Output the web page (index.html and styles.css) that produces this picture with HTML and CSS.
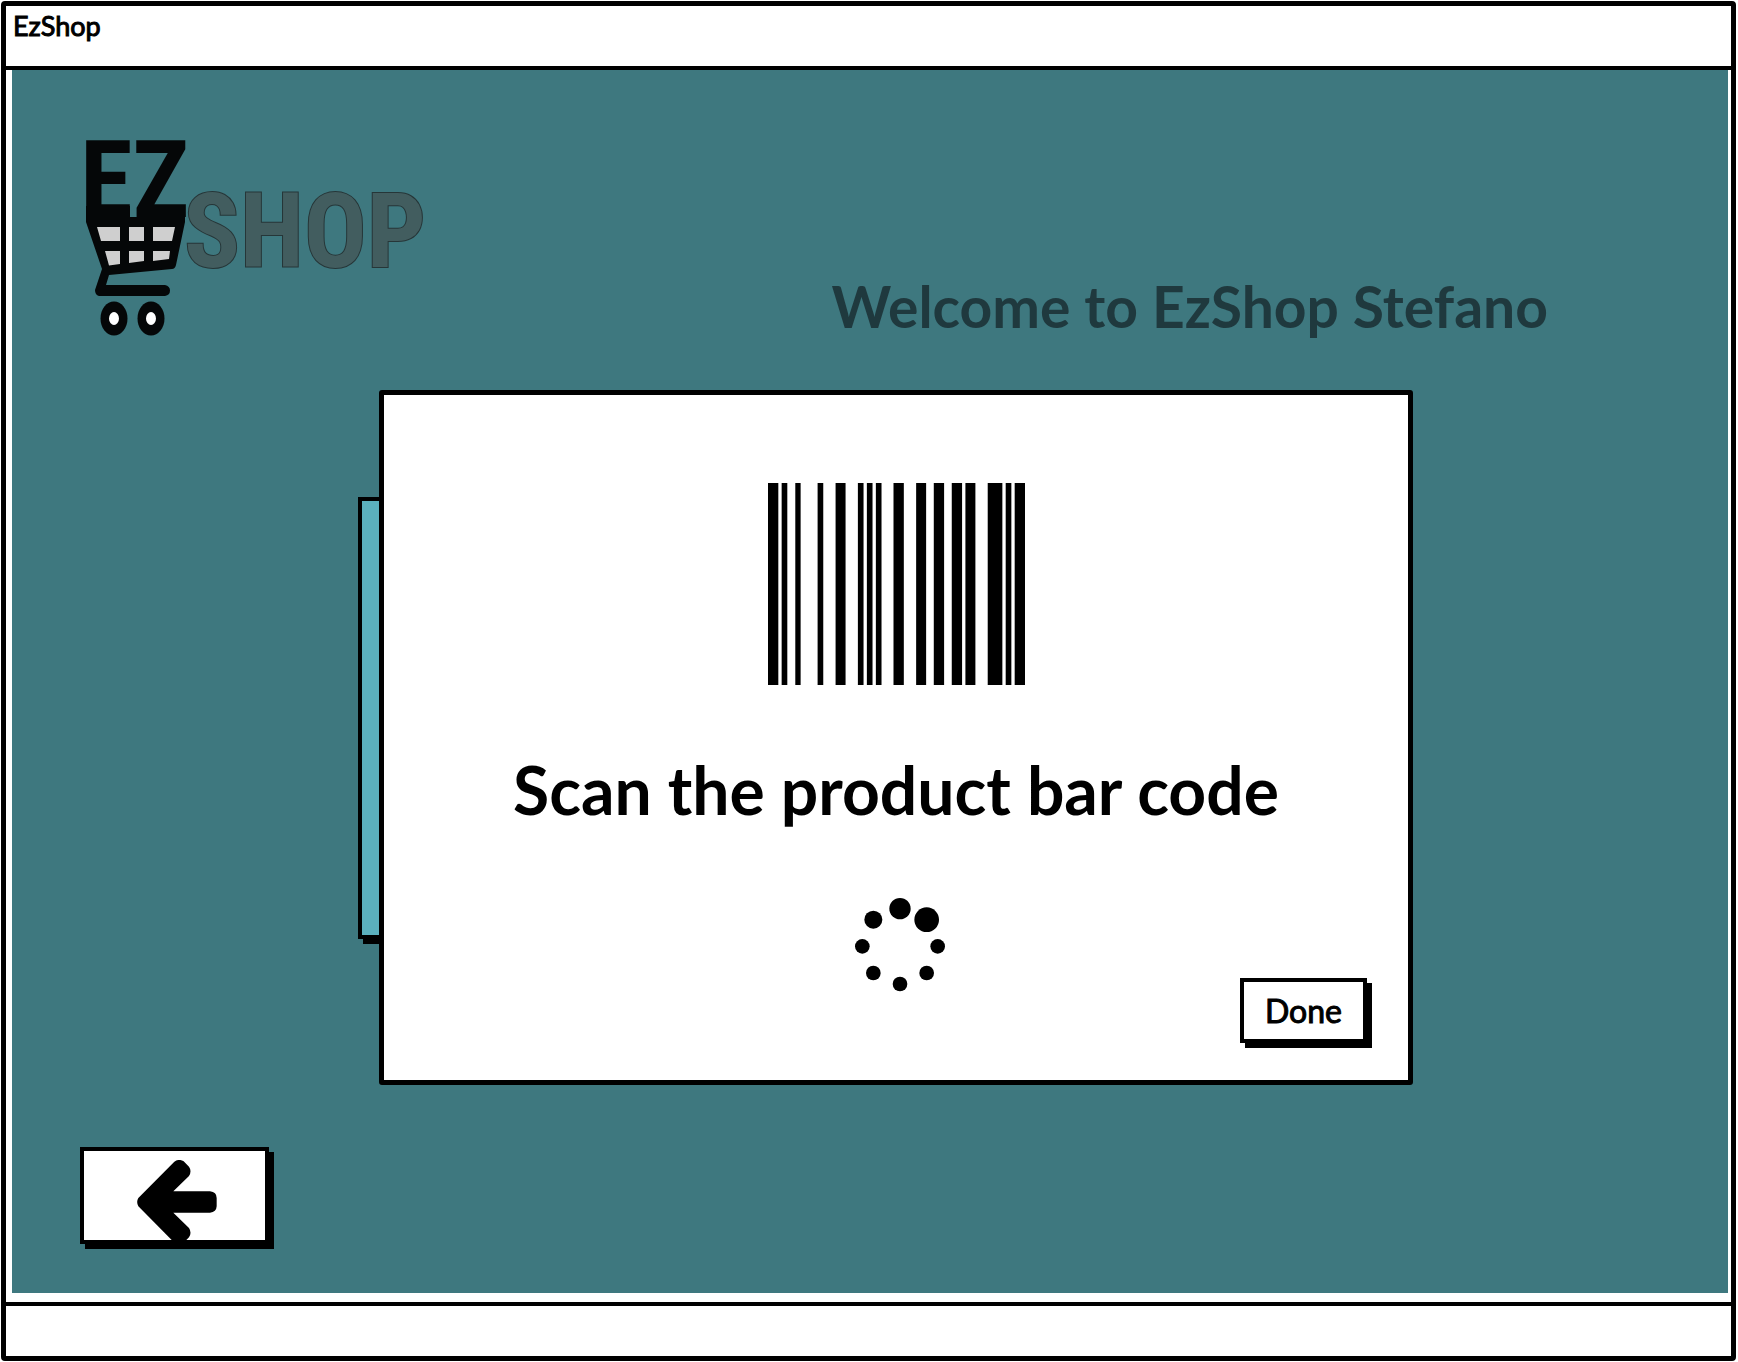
FILE: index.html
```html
<!DOCTYPE html>
<html lang="en">
<head>
<meta charset="utf-8">
<title>EzShop</title>
<link rel="stylesheet" href="styles.css">
</head>
<body>
<div class="window">
  <header class="titlebar">EzShop</header>
  <main class="stage">
    <div class="banner">
      <svg class="logo" viewBox="86 115 340 222" role="img" aria-label="EZ Shop">
        <text class="logo-ez" x="80" y="217">EZ</text>
        <text class="logo-shop" x="184" y="267">SHOP</text>
        <path class="ink" d="M86 206H130V217H140V206H185V222L176 265Q175 269 172 269L109 275L106 285H165Q170 286 170 290.500T165 296H99Q95 295 95 290L102 269L86 222Z"/>
        <path class="mesh" d="M97 227H120V241H101ZM129 227H144V241H129ZM153 227H175L172 241H153ZM105 251H120V264L109 265.500ZM129 251H144V261L129 263ZM153 251H170L169 259L153 261Z"/>
        <g class="ink"><ellipse cx="114" cy="318.500" rx="13.500" ry="17"/><ellipse cx="151" cy="318.500" rx="13.500" ry="17"/></g>
        <g class="hub"><ellipse cx="114" cy="318.500" rx="5" ry="6.500"/><ellipse cx="151" cy="318.500" rx="5" ry="6.500"/></g>
      </svg>
      <h1 class="welcome">Welcome to EzShop Stefano</h1>
    </div>
    <div class="dialog-area">
      <section class="dialog" role="dialog" aria-labelledby="scan-title">
        <div class="card-behind"></div>
        <div class="dialog-body">
          <svg class="barcode" viewBox="22 39 772 606" preserveAspectRatio="none" aria-hidden="true">
            <path d="M22 39h31v606h-31zM63 39h17v606h-17zM104 39h16v606h-16zM171 39h17v606h-17zM225 39h30v606h-30zM292 39h17v606h-17zM319 39h17v606h-17zM346 39h17v606h-17zM399 39h31v606h-31zM467 39h30v606h-30zM520 39h31v606h-31zM574 39h31v606h-31zM615 39h30v606h-30zM682 39h44v606h-44zM736 39h17v606h-17zM763 39h31v606h-31z"/>
          </svg>
          <h2 class="scan" id="scan-title">Scan the product bar code</h2>
          <div class="actions">
            <svg class="spinner" viewBox="45 54 270 282" role="img" aria-label="Waiting for scan">
              <circle cx="180" cy="86" r="32"/><circle cx="260" cy="119" r="37"/><circle cx="293" cy="199" r="22"/><circle cx="260" cy="279" r="22"/><circle cx="180" cy="312" r="22"/><circle cx="100" cy="279" r="22"/><circle cx="67" cy="199" r="22"/><circle cx="100" cy="119" r="27"/>
            </svg>
            <button class="btn done" type="button">Done</button>
          </div>
        </div>
      </section>
    </div>
    <button class="btn back" type="button" aria-label="Back">
      <svg class="arrow" viewBox="231 89 240 240" aria-hidden="true">
        <path d="M343 94Q357 84 371 93L387 109Q396 122 387 137L340 183H450Q470 185 470 203V228Q469 246 450 247H340L387 293Q396 307 387 321L371 337H343L235 228Q228 215 235 203Z"/>
      </svg>
    </button>
  </main>
  <footer class="statusbar"></footer>
</div>
</body>
</html>
```
FILE: styles.css
```css
* { box-sizing: border-box; }

body {
  margin: 0;
  background: #fff;
  color: #000;
  font-family: Lato, "Noto Sans", sans-serif;
}

.window {
  display: flex;
  flex-direction: column;
  min-height: calc(100vh - 2px);
  margin: 1px 2px 1px 1px;
  border: 5px solid #000;
  border-radius: 4px;
}

.titlebar {
  height: 64px;
  padding: 4px 7px;
  border-bottom: 4px solid #000;
  font-size: 27px;
  line-height: 32px;
  -webkit-text-stroke: 1px #000;
}

.stage {
  flex: 1;
  display: flex;
  flex-direction: column;
  align-items: flex-start;
  margin: 0 3px 9px 6px;
  padding: 45px 74px 47px;
  background: #3e787f;
}

.banner {
  display: flex;
  align-items: flex-end;
  justify-content: space-between;
  align-self: stretch;
  padding-right: 106px;
}

.logo { width: 340px; height: 222px; overflow: visible; }
.logo text { font-family: "Liberation Sans Narrow", "Roboto Condensed", "DejaVu Sans Condensed", sans-serif; font-weight: 700; }
.logo-ez { font-size: 107px; fill: #050708; }
.logo-shop { font-size: 104px; fill: #425d5f; stroke: #263638; stroke-width: 2px; paint-order: stroke; }
.ink { fill: #050708; }
.mesh { fill: #cfcfcf; }
.hub { fill: #fff; }

.welcome {
  margin: 0;
  color: #1f393e;
  font-size: 57px;
  font-weight: 700;
  line-height: 62px;
}

.dialog-area {
  display: flex;
  justify-content: center;
  align-self: stretch;
  padding: 53px 0 62px 52px;
}

.dialog {
  position: relative;
  isolation: isolate;
  width: 1034px;
  max-width: 100%;
}

.card-behind {
  position: absolute;
  z-index: -1;
  top: 107px;
  bottom: 146px;
  left: -21px;
  width: 60px;
  border: 4px solid #000;
  background: #5bb0bd;
  box-shadow: 5px 5px 0 #000;
}

.dialog-body {
  display: flex;
  flex-direction: column;
  align-items: center;
  padding: 88px 41px 37px;
  border: 5px solid #000;
  border-radius: 3px;
  background: #fff;
}

.barcode { width: 257px; height: 202px; }

.scan {
  margin: 65px 0 68px;
  font-size: 66px;
  font-weight: 700;
  line-height: 80px;
}

.actions {
  display: grid;
  grid-template-columns: 1fr auto 1fr;
  align-self: stretch;
  min-height: 145px;
  padding-left: 8px;
}

.spinner { grid-column: 2; width: 90px; height: 94px; }

.btn {
  border: 4px solid #000;
  background: #fff;
  color: #000;
  font-family: inherit;
  box-shadow: 5px 5px 0 #000;
}

.done {
  align-self: end;
  justify-self: end;
  width: 127px;
  height: 65px;
  padding: 0;
  font-size: 32px;
  -webkit-text-stroke: 1px #000;
}

.back {
  display: flex;
  justify-content: center;
  align-items: flex-end;
  width: 189px;
  height: 97px;
  margin-left: -6px;
  padding: 0 0 0 4px;
}

.arrow { width: 80px; height: 80px; }

.statusbar { height: 54px; border-top: 4px solid #000; }
```
